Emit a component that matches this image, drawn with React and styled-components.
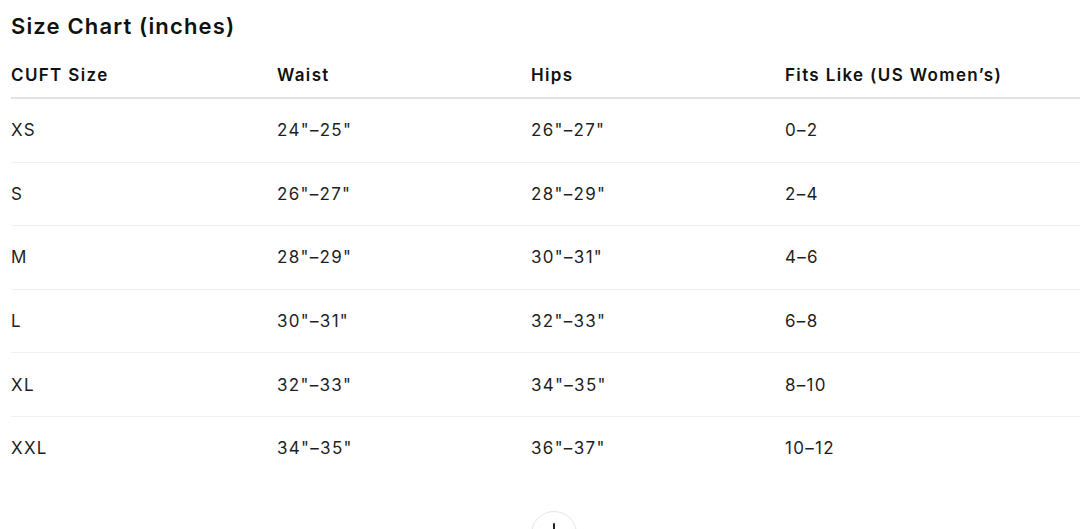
import React from "react";
import styled, { createGlobalStyle } from "styled-components";

const Global = createGlobalStyle`
  html, body { margin: 0; padding: 0; background: #ffffff; overflow: hidden; }
  body { font-family: Inter, "Liberation Sans", Arial, sans-serif; color: #1a1a1a; }
`;

const Page = styled.div`
  width: 1086px;
  padding: 12px 0 0 11px;
  display: flex;
  flex-direction: column;
`;

const Title = styled.h2`
  margin: 0;
  font-size: 22px;
  line-height: 28px;
  font-weight: 600;
  color: #111;
  letter-spacing: 1.15px;
`;

const Table = styled.div`
  display: flex;
  flex-direction: column;
  margin-top: 13px;
`;

const Row = styled.div`
  display: grid;
  grid-template-columns: 266px 254px 254px 1fr;
  align-items: center;
  height: ${(p) => (p.$head ? "32px" : "62.6px")};
  padding-top: ${(p) => (p.$head ? "12px" : "0")};
  border-bottom: ${(p) =>
    p.$head ? "2px solid #e3e3e3" : p.$last ? "none" : "1px solid #f1f1f1"};
`;

const Cell = styled.div`
  font-size: 17px;
  line-height: 20px;
  font-weight: ${(p) => (p.$head ? 600 : 400)};
  letter-spacing: ${(p) => (p.$head ? "1.35px" : "1.3px")};
  color: ${(p) => (p.$head ? "#111" : "#1f1f1f")};
  align-self: ${(p) => (p.$head ? "start" : "center")};
  white-space: nowrap;
`;

const Footer = styled.div`
  display: flex;
  justify-content: center;
  padding-top: 31px;
`;

const RoundButton = styled.button`
  width: 46px;
  height: 46px;
  border-radius: 50%;
  border: 1px solid #e6e6e6;
  background: #fff;
  display: flex;
  align-items: center;
  justify-content: center;
  padding: 0;
  color: #222;
`;

const headers = ["CUFT Size", "Waist", "Hips", "Fits Like (US Women\u2019s)"];
const rows = [
  ["XS", "24\"\u201325\"", "26\"\u201327\"", "0\u20132"],
  ["S", "26\"\u201327\"", "28\"\u201329\"", "2\u20134"],
  ["M", "28\"\u201329\"", "30\"\u201331\"", "4\u20136"],
  ["L", "30\"\u201331\"", "32\"\u201333\"", "6\u20138"],
  ["XL", "32\"\u201333\"", "34\"\u201335\"", "8\u201310"],
  ["XXL", "34\"\u201335\"", "36\"\u201337\"", "10\u201312"],
];

export default function App() {
  return (
    <>
      <Global />
      <Page>
        <Title>Size Chart (inches)</Title>
        <Table>
          <Row $head>
            {headers.map((h) => (
              <Cell $head key={h}>{h}</Cell>
            ))}
          </Row>
          {rows.map((r, i) => (
            <Row key={r[0]} $last={i === rows.length - 1}>
              {r.map((c, j) => (
                <Cell key={j}>{c}</Cell>
              ))}
            </Row>
          ))}
        </Table>
        <Footer>
          <RoundButton aria-label="More">
            <svg width="22" height="22" viewBox="0 0 22 22" fill="none" stroke="currentColor" strokeWidth="2" strokeLinecap="round">
              <path d="M11 1v20M1 11h20" />
            </svg>
          </RoundButton>
        </Footer>
      </Page>
    </>
  );
}
